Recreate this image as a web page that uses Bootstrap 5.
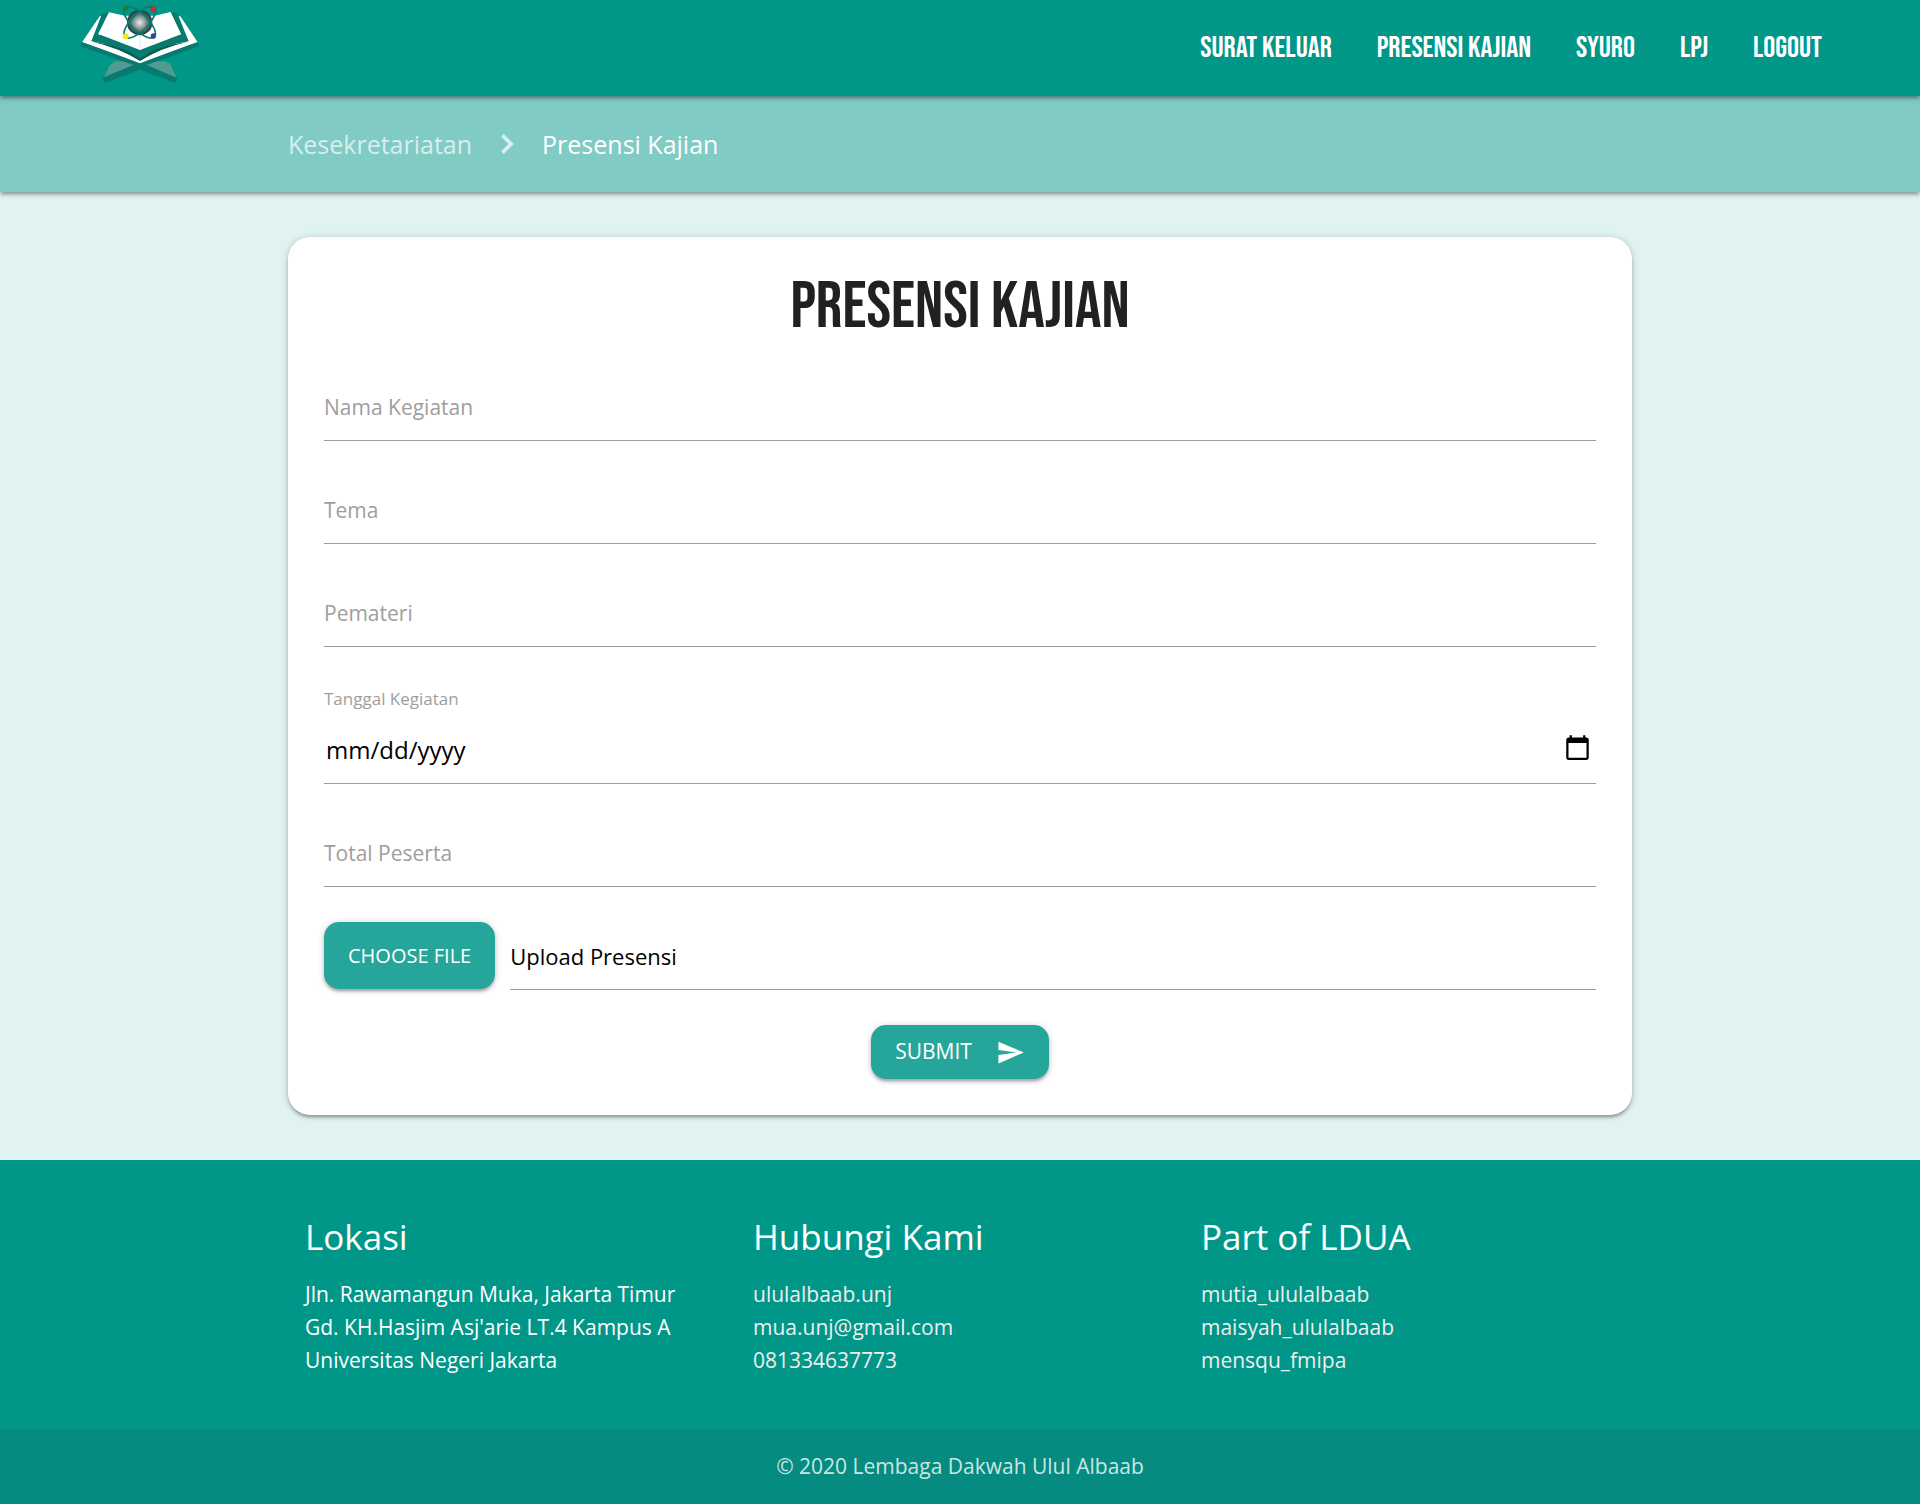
<!DOCTYPE html>
<html lang="id">
<head>
<meta charset="utf-8">
<meta name="viewport" content="width=device-width, initial-scale=1">
<title>Presensi Kajian</title>
<link href="https://cdn.jsdelivr.net/npm/bootstrap@5.3.0/dist/css/bootstrap.min.css" rel="stylesheet">
<style>
:root { --teal: #009688; --teal-btn: #26a69a; --line: #9e9e9e; }
body { background: #e0f2f1; font-family: "Segoe UI", "Open Sans", "Noto Sans", sans-serif; font-size: 21px; line-height: 33px; color: rgba(0,0,0,.87); }
.lift { box-shadow: 0 3px 3px 0 rgba(0,0,0,.14), 0 4px 2px -2px rgba(0,0,0,.12), 0 1px 7px 0 rgba(0,0,0,.2); }
.display-face { font-family: "Bebas Neue", "Roboto Condensed", "Liberation Sans Narrow", Roboto, sans-serif; text-transform: uppercase; }
.topbar { background: var(--teal); height: 96px; padding: 0 98px 0 60px; z-index: 3; }
.menu { gap: 45px; }
.menu .nav-link { color: #fff; font-size: 30px; padding: 0; line-height: 96px; }
.crumbs { background: #80cbc4; height: 96px; font-size: 25px; z-index: 2; }
.crumbs a { color: rgba(255,255,255,.7); text-decoration: none; }
.crumbs a.current { color: #fff; }
.wrap { width: 70%; margin-left: auto; margin-right: auto; }
.crumb-arrow { margin: 0 16px; fill: rgba(255,255,255,.7); }
.sheet { border: 0; border-radius: 22px; padding: 36px; margin-top: 45px; margin-bottom: 45px; }
.sheet h1 { font-size: 66px; font-weight: 400; line-height: 70px; margin: 0 0 30px; color: #212121; }
.field { display: grid; margin-bottom: 35px; }
.field > label, .field > input { grid-area: 1 / 1; }
.field > label { align-self: center; color: var(--line); pointer-events: none; }
.field.dated > label { font-size: 17px; line-height: 34px; }
.field.dated > input { grid-area: 2 / 1; }
.line-input { height: 68px; width: 100%; border: 0; border-bottom: 1px solid var(--line); background: transparent; outline: 0; padding: 0; color: #000; border-radius: 0; font-size: 22px; }
.line-input[type=date] { font-size: 24px; padding: 0 5px 0 2px; }
.line-input::-webkit-calendar-picker-indicator { width: 27px; height: 27px; padding: 0; background-size: 27px 27px; margin-bottom: 5px; }
.btn-teal, .btn-teal:hover { background: var(--teal-btn); color: #fff; border: 0; border-radius: 15px; text-transform: uppercase; }
.pick { font-size: 20px; line-height: 67px; padding: 0 24px; margin-right: 15px; }
.send-row { margin-top: 35px; }
.send { font-size: 21px; height: 54px; padding: 0 24px; }
.site-footer { background: var(--teal); color: #fff; }
.site-footer h2 { font-size: 35px; line-height: 40px; font-weight: 400; margin: 0 0 21px; }
.site-footer .foot-cols { padding: 57px 0 52px; }
.site-footer [class^="col"] { padding: 0 17px; }
.site-footer a { color: #eee; text-decoration: none; }
.copy { background: rgba(51,51,51,.1); color: rgba(255,255,255,.8); line-height: 75px; }
</style>
<script src="https://cdn.jsdelivr.net/npm/bootstrap@5.3.0/dist/js/bootstrap.bundle.min.js"></script>
</head>
<body>
<nav class="topbar lift position-relative d-flex align-items-center justify-content-between">
  <a href="#" aria-label="Beranda" class="d-block">
    <svg class="d-block" width="160" height="96" viewBox="0 0 480 288">
      <defs><radialGradient id="orb"><stop offset="0" stop-color="#e8efee"/><stop offset=".45" stop-color="#8d9b9b"/><stop offset="1" stop-color="#173536"/></radialGradient></defs>
      <path fill="#529b93" d="M165 184 312 184 330 190 350 235 240 198 131 235 148 198z"/>
      <path fill="#087b70" d="M127 233 220 195 240 188 262 196 352 234 348 249 240 209 132 249z"/>
      <path fill="#fff" d="M119 49 66 127 240 194 413 127 361 49z"/>
      <path fill="#087b70" d="M66 126 240 185 413 126 418 139 240 202 61 139z"/>
      <path fill="#fff" d="M82 118 94 124Q182 140 240 181Q298 140 386 124L398 118 410 126 240 190 69 126z"/>
      <path fill="#087b70" d="M127 39 146 38 117 103 240 150 363 103 332 38 352 39 386 124Q298 137 240 181Q182 137 94 124z"/>
      <path fill="#045c55" d="M96 125Q188 137 240 176Q292 137 384 125Q300 144 240 183Q180 144 96 125z"/>
      <path fill="#fff" d="M147 37 195 47 284 47 332 36 363 103Q288 112 239 149Q190 112 114 103z"/>
      <path fill="#d5efec" d="M237 100h5v44h-5z" opacity=".5"/>
      <circle cx="239" cy="68" r="38" fill="url(#orb)"/>
      <g fill="none" stroke="#087b70" stroke-width="5"><ellipse cx="239" cy="67" rx="62" ry="25" transform="rotate(45 239 67)"/><ellipse cx="239" cy="67" rx="62" ry="25" transform="rotate(-45 239 67)"/></g>
      <circle cx="197" cy="25" r="8" fill="#168238"/><circle cx="279" cy="27" r="8" fill="#d32832"/><circle cx="197" cy="109" r="9" fill="#f5ea19"/><circle cx="280" cy="108" r="8" fill="#274a9e"/>
    </svg>
  </a>
  <div class="menu d-flex display-face">
    <a class="nav-link" href="#">Surat Keluar</a>
    <a class="nav-link" href="#">Presensi Kajian</a>
    <a class="nav-link" href="#">Syuro</a>
    <a class="nav-link" href="#">LPJ</a>
    <a class="nav-link" href="#">Logout</a>
  </div>
</nav>
<nav class="crumbs lift position-relative" aria-label="breadcrumb">
  <div class="wrap h-100 d-flex align-items-center">
    <a href="#">Kesekretariatan</a>
    <svg class="crumb-arrow" width="38" height="38" viewBox="0 0 24 24"><path stroke="#d9efed" stroke-width=".6" d="M10 6 8.59 7.41 13.17 12l-4.58 4.59L10 18l6-6z"/></svg>
    <a href="#" class="current" aria-current="page">Presensi Kajian</a>
  </div>
</nav>
<main class="wrap">
  <form class="card sheet lift">
    <h1 class="display-face text-center">Presensi Kajian</h1>
    <div class="field"><label for="nama">Nama Kegiatan</label><input class="line-input" id="nama" type="text"></div>
    <div class="field"><label for="tema">Tema</label><input class="line-input" id="tema" type="text"></div>
    <div class="field"><label for="pemateri">Pemateri</label><input class="line-input" id="pemateri" type="text"></div>
    <div class="field dated"><label for="tanggal">Tanggal Kegiatan</label><input class="line-input" id="tanggal" type="date"></div>
    <div class="field"><label for="total">Total Peserta</label><input class="line-input" id="total" type="text"></div>
    <div class="d-flex align-items-start">
      <label class="btn btn-teal pick lift flex-shrink-0" for="berkas">Choose File</label>
      <input class="visually-hidden" id="berkas" type="file">
      <input class="line-input" type="text" value="Upload Presensi" aria-label="Nama berkas" readonly>
    </div>
    <div class="send-row d-flex justify-content-center">
      <button class="btn btn-teal send lift d-flex align-items-center" type="submit">Submit
        <svg class="ms-4" width="29" height="29" viewBox="0 0 24 24" fill="#fff"><path d="M2.01 21 23 12 2.01 3 2 10l15 2-15 2z"/></svg>
      </button>
    </div>
  </form>
</main>
<footer class="site-footer">
  <div class="wrap foot-cols">
    <div class="row g-0">
      <div class="col-4"><h2>Lokasi</h2><div>Jln. Rawamangun Muka, Jakarta Timur<br>Gd. KH.Hasjim Asj'arie LT.4 Kampus A<br>Universitas Negeri Jakarta</div></div>
      <div class="col-4"><h2>Hubungi Kami</h2><ul class="list-unstyled mb-0"><li><a href="#">ululalbaab.unj</a></li><li><a href="#">mua.unj@gmail.com</a></li><li><a href="#">081334637773</a></li></ul></div>
      <div class="col-4"><h2>Part of LDUA</h2><ul class="list-unstyled mb-0"><li><a href="#">mutia_ululalbaab</a></li><li><a href="#">maisyah_ululalbaab</a></li><li><a href="#">mensqu_fmipa</a></li></ul></div>
    </div>
  </div>
  <div class="copy text-center">© 2020 Lembaga Dakwah Ulul Albaab</div>
</footer>
</body>
</html>
